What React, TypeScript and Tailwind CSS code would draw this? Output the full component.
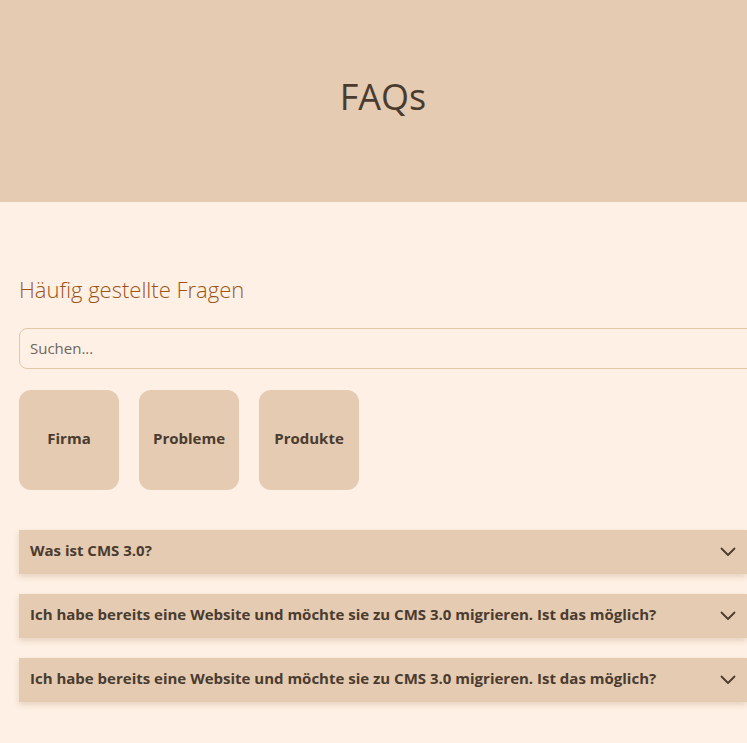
import React from "react";

const ff = { fontFamily: "'Open Sans', 'Noto Sans', sans-serif" };

function Chevron() {
  return (
    <svg width="16" height="10" viewBox="0 0 16 10" fill="none" stroke="#4a3b30" strokeWidth="1.8" strokeLinecap="round" strokeLinejoin="round">
      <path d="M1.5 1.5 L8 8 L14.5 1.5" />
    </svg>
  );
}

const questions = [
  "Was ist CMS 3.0?",
  "Ich habe bereits eine Website und möchte sie zu CMS 3.0 migrieren. Ist das möglich?",
  "Ich habe bereits eine Website und möchte sie zu CMS 3.0 migrieren. Ist das möglich?",
];

export default function App() {
  return (
    <div className="w-[747px] h-[743px] overflow-hidden bg-[#fef0e4]" style={ff}>
      <div className="w-[766px]">
        <header className="h-[202px] bg-[#e5cbb1] flex items-center justify-center">
          <h1 className="text-[36px] font-normal text-[#4a3b30] pb-[8px]">FAQs</h1>
        </header>
        <main className="px-[19px] pt-[72px]">
          <h2 className="text-[22px] font-light text-[#9c5416] leading-[30px]">Häufig gestellte Fragen</h2>
          <div className="mt-[24px] h-[41px] w-[760px] rounded-[8px] border border-[#e3c7ab] bg-[#fef0e4] flex items-center px-[10px]">
            <span className="text-[15px] text-[#6e6661]">Suchen...</span>
          </div>
          <div className="mt-[21px] flex gap-[20px]">
            {["Firma", "Probleme", "Produkte"].map((c) => (
              <div key={c} className="w-[100px] h-[100px] rounded-[12px] bg-[#e5cbb1] flex items-center justify-center text-[15px] font-bold text-[#4a3b30] pb-[4px]">
                {c}
              </div>
            ))}
          </div>
          <div className="mt-[40px] flex flex-col gap-[20px]">
            {questions.map((q, i) => (
              <div key={i} className="h-[44px] bg-[#e5cbb1] shadow-[0_3px_6px_rgba(120,80,40,0.18)] flex items-center justify-between pl-[11px] pr-[11px]">
                <span className="text-[15px] font-bold text-[#4a3b30] pb-[3px]">{q}</span>
                <Chevron />
              </div>
            ))}
          </div>
        </main>
      </div>
    </div>
  );
}
